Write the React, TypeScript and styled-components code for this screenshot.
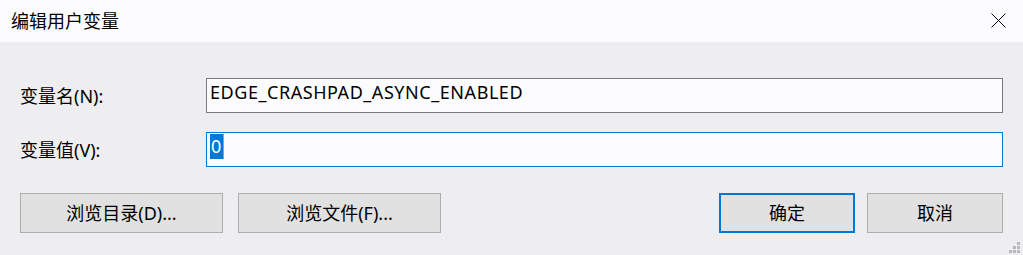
import styled, { createGlobalStyle } from 'styled-components';

const GlobalStyle = createGlobalStyle`
  html, body {
    margin: 0;
    padding: 0;
    background: #eeeef0;
  }
  * {
    box-sizing: border-box;
  }
`;

const Dialog = styled.div`
  width: 1023px;
  height: 255px;
  display: flex;
  flex-direction: column;
  background: #eeeef0;
  font-family: 'Noto Sans', 'Noto Sans CJK SC', sans-serif;
  font-size: 18px;
  color: #000000;
  position: relative;
`;

const TitleBar = styled.div`
  height: 42px;
  flex: none;
  display: flex;
  align-items: center;
  justify-content: space-between;
  padding: 0 17px 0 11px;
  background: #fcfcff;
`;

const Title = styled.div`
  font-size: 18px;
  line-height: 24px;
`;

const CloseButton = styled.button`
  width: 15px;
  height: 15px;
  padding: 0;
  border: none;
  background: none;
  display: flex;
  margin-top: -2px;

  svg {
    display: block;
  }
`;

const Body = styled.div`
  flex: 1;
  display: flex;
  flex-direction: column;
  padding: 36px 20px 0 20px;
`;

const Form = styled.div`
  display: grid;
  grid-template-columns: 186px 1fr;
  row-gap: 19px;
  align-items: center;
`;

const Label = styled.label`
  line-height: 24px;
`;

const Field = styled.div<{ $focused?: boolean }>`
  height: 35px;
  border: 1px solid ${(p) => (p.$focused ? '#0078d7' : '#7a7a7a')};
  background: #fcfcff;
  padding: 1px 3px 0;
  line-height: 25px;
  letter-spacing: 0.55px;
  white-space: nowrap;
  display: flex;
  align-items: flex-start;
`;

const Selection = styled.span`
  display: inline-block;
  height: 25px;
  padding: 0 1px 0 1px;
  background: #0078d7;
  color: #ffffff;
  border-right: 1px solid #ff8728;
`;

const ButtonRow = styled.div`
  display: flex;
  justify-content: space-between;
  margin-top: 26px;
`;

const ButtonGroup = styled.div<{ $gap: number }>`
  display: flex;
  gap: ${(p) => p.$gap}px;
`;

const Button = styled.button<{ $wide?: boolean; $default?: boolean }>`
  width: ${(p) => (p.$wide ? '203px' : '136px')};
  height: 40px;
  padding: 0;
  background: #e1e1e1;
  border: ${(p) => (p.$default ? '2px solid #0078d7' : '1px solid #adadad')};
  font-family: inherit;
  font-size: 18px;
  color: #000000;
  line-height: 24px;
`;

const Grip = styled.div`
  position: absolute;
  right: 3px;
  bottom: 2px;
  display: grid;
  grid-template-columns: repeat(3, 3px);
  grid-template-rows: repeat(3, 3px);
  gap: 1px;
`;

const Dot = styled.span<{ $on: boolean }>`
  background: ${(p) => (p.$on ? '#b9b9bb' : 'transparent')};
`;

const gripPattern = [0, 0, 1, 0, 1, 1, 1, 1, 1];

export default function App() {
  return (
    <>
      <GlobalStyle />
      <Dialog>
        <TitleBar>
          <Title>编辑用户变量</Title>
          <CloseButton aria-label="关闭">
            <svg width="15" height="15" viewBox="0 0 15 15">
              <path d="M0.5 0.5 L14.5 14.5 M14.5 0.5 L0.5 14.5" stroke="#000" strokeWidth="1" fill="none" />
            </svg>
          </CloseButton>
        </TitleBar>
        <Body>
          <Form>
            <Label>变量名(N):</Label>
            <Field>EDGE_CRASHPAD_ASYNC_ENABLED</Field>
            <Label>变量值(V):</Label>
            <Field $focused>
              <Selection>0</Selection>
            </Field>
          </Form>
          <ButtonRow>
            <ButtonGroup $gap={15}>
              <Button $wide>浏览目录(D)...</Button>
              <Button $wide>浏览文件(F)...</Button>
            </ButtonGroup>
            <ButtonGroup $gap={12}>
              <Button $default>确定</Button>
              <Button>取消</Button>
            </ButtonGroup>
          </ButtonRow>
        </Body>
        <Grip>
          {gripPattern.map((on, i) => (
            <Dot key={i} $on={on === 1} />
          ))}
        </Grip>
      </Dialog>
    </>
  );
}
